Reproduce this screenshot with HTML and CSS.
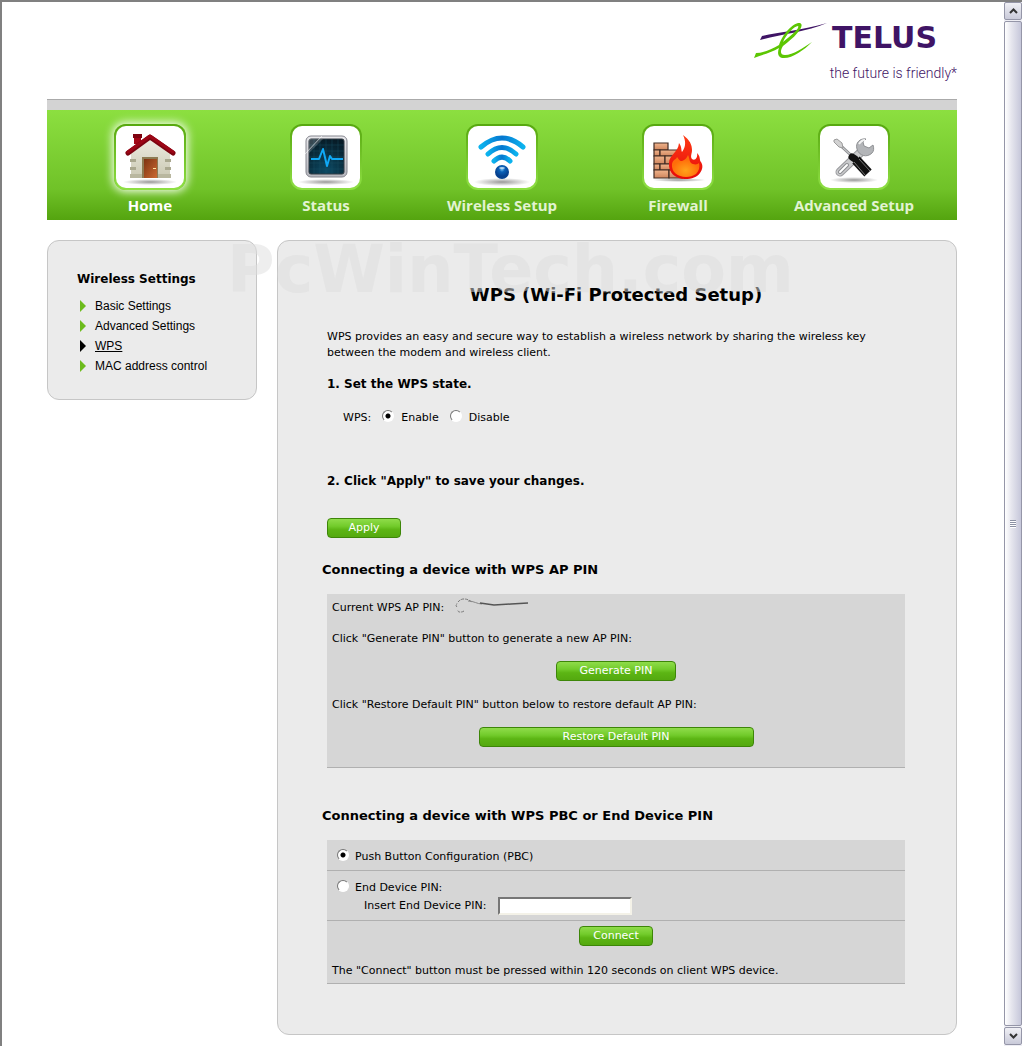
FILE: index.html
```html
<!DOCTYPE html>
<html lang="en">
<head>
<meta charset="utf-8">
<title>WPS (Wi-Fi Protected Setup)</title>
<link rel="stylesheet" href="styles.css">
</head>
<body>
<div class="frame">
  <div class="page">
    <header class="header">
      <div class="logo">
        <svg class="logo-mark" width="74" height="38" viewBox="0 0 74 38" aria-hidden="true">
          <path d="M8 14 C26 10 48 8 73 1 C52 10 28 12 6 18 Z" fill="#3f1465"/>
          <path d="M0 36 L2 31 C10 31 18 27 25 23 C29 11 40 0 46 1 C51 3 44 13 29 24 C26 29 26 33 31 33 C39 33 49 26 58 20 C50 28 39 36 30 36 C24 36 23 31 25 26 C17 31 7 33 0 36 Z M29 20 C38 13 46 6 44 4 C40 4 32 13 29 20 Z" fill="#5cc603" fill-rule="evenodd"/>
        </svg>
        <span class="logo-name">TELUS</span>
      </div>
      <p class="tagline">the future is friendly*</p>
    </header>

    <nav class="nav">
      <a class="nav-item current" href="#home">
        <span class="tile">
          <svg width="72" height="66" viewBox="0 0 72 66" aria-hidden="true">
            <defs>
              <radialGradient id="shade"><stop offset="0" stop-color="#999"/><stop offset="1" stop-color="#fff"/></radialGradient>
              <linearGradient id="wall" x2="0" y2="1"><stop offset="0" stop-color="#eeede2"/><stop offset="1" stop-color="#cbc9b4"/></linearGradient>
              <linearGradient id="door" x2="1" y2="1"><stop offset="0" stop-color="#7d3210"/><stop offset="1" stop-color="#cc6a32"/></linearGradient>
            </defs>
            <ellipse cx="36" cy="56" rx="27" ry="3" fill="url(#shade)"/>
            <path d="M20 9h7v9h-7z" fill="#a30716"/><path d="M19 8h9v4h-9z" fill="#7f0410"/>
            <path d="M17 51V26L36 11l20 15v25z" fill="url(#wall)"/>
            <path d="M16 33h6v3h-6zm0 8h6v3h-6zM51 33h6v3h-6zm0 8h6v3h-6z" fill="#aaa88f"/>
            <path d="M16 48h12v4H16zM44 48h13v4H44z" fill="#b9b79f"/>
            <path d="M28 31h16v21H28z" fill="#8d7b53"/><path d="M30 33h13v19H30z" fill="url(#door)"/>
            <path d="M39 42h3v1h-3z" fill="#ffe3a0"/>
            <path d="M14 27L36 11l23 16" fill="none" stroke="#7c0410" stroke-width="5" stroke-linecap="round" stroke-linejoin="round"/>
            <path d="M14 26L36 10l23 16" fill="none" stroke="#9c0616" stroke-width="3" stroke-linecap="round" stroke-linejoin="round"/>
          </svg>
        </span>
        Home
      </a>
      <a class="nav-item" href="#status">
        <span class="tile">
          <svg width="72" height="66" viewBox="0 0 72 66" aria-hidden="true">
            <defs>
              <linearGradient id="bezel" x2="0" y2="1"><stop offset="0" stop-color="#e9e9ec"/><stop offset="1" stop-color="#b4b5bc"/></linearGradient>
              <radialGradient id="screen" cx=".5" cy=".9" r=".9"><stop offset="0" stop-color="#0b4963"/><stop offset="1" stop-color="#071b26"/></radialGradient>
            </defs>
            <ellipse cx="36" cy="56" rx="28" ry="3" fill="url(#shade)"/>
            <rect x="16" y="10" width="41" height="41" rx="5" fill="url(#bezel)" stroke="#85868e"/>
            <rect x="19" y="13" width="35" height="35" rx="2" fill="url(#screen)" stroke="#333b42"/>
            <path d="M24 13v35M30 13v35M36 13v35M42 13v35M48 13v35M19 19h35M19 25h35M19 31h35M19 37h35M19 43h35" stroke="#1b5367" stroke-width=".4"/>
            <path d="M19 13h14L19 27z" fill="#fff" opacity=".2"/>
            <path d="M15 28L32 10" stroke="#fff" opacity=".6"/>
            <path d="M21 33h8l4-10 4 17 3-10 2 3h11" fill="none" stroke="#10a8f5" stroke-width="2" stroke-linejoin="round"/>
          </svg>
        </span>
        Status
      </a>
      <a class="nav-item" href="#wireless">
        <span class="tile">
          <svg width="72" height="66" viewBox="0 0 72 66" aria-hidden="true">
            <defs>
              <linearGradient id="wave"><stop offset="0" stop-color="#0bb2ee"/><stop offset=".5" stop-color="#0576cf"/><stop offset="1" stop-color="#0bb2ee"/></linearGradient>
              <radialGradient id="ball" cx=".5" cy=".3"><stop offset="0" stop-color="#79c4f3"/><stop offset=".4" stop-color="#0a61b8"/><stop offset="1" stop-color="#06418f"/></radialGradient>
            </defs>
            <ellipse cx="36" cy="56" rx="28" ry="4" fill="url(#shade)"/>
            <g fill="none" stroke="url(#wave)" stroke-width="5" stroke-linecap="round">
              <path d="M15 21Q36 3 57 21"/><path d="M22 28Q36 15 50 28"/><path d="M28 35Q36 27 44 35"/>
            </g>
            <circle cx="36" cy="46" r="7" fill="url(#ball)"/><ellipse cx="36" cy="42" rx="3" ry="1" fill="#fff" opacity=".6"/>
          </svg>
        </span>
        Wireless Setup
      </a>
      <a class="nav-item" href="#firewall">
        <span class="tile">
          <svg width="72" height="66" viewBox="0 0 72 66" aria-hidden="true">
            <defs>
              <linearGradient id="brick" x2="0" y2="1"><stop offset="0" stop-color="#f0b48c"/><stop offset="1" stop-color="#cf865e"/></linearGradient>
              <linearGradient id="flame" x2="0" y2="1"><stop offset="0" stop-color="#ff3b14"/><stop offset="1" stop-color="#e60a0a"/></linearGradient>
              <radialGradient id="glow" cx=".5" cy=".7"><stop offset="0" stop-color="#ffa31a"/><stop offset="1" stop-color="#ff6d0a"/></radialGradient>
            </defs>
            <ellipse cx="37" cy="54" rx="27" ry="2" fill="url(#shade)"/>
            <g fill="url(#brick)" stroke="#402b23" stroke-width="1.2">
              <path d="M12 17h14v7H12z"/><path d="M12 24h6v6h-6z"/><path d="M18 24h17v6H18z"/>
              <path d="M12 30h11v8H12z"/><path d="M23 30h12v8H23z"/><path d="M12 38h6v6h-6z"/>
              <path d="M18 38h17v6H18z"/><path d="M12 44h15v8H12z"/><path d="M27 44h14v8H27z"/>
            </g>
            <path d="M43 53C33 53 26 46 27 37C27 29 36 27 37 17C40 21 39 24 40 26C44 21 44 15 41 9C48 14 50 19 50 24C50 28 48 30 50 33C53 35 56 32 55 27C59 31 57 34 59 36C61 39 61 43 58 47C55 51 50 53 43 53Z" fill="url(#flame)"/>
            <path d="M44 51C36 51 29 46 30 38C31 33 34 34 35 31C37 33 37 35 40 35C43 34 45 32 46 29C48 33 47 37 51 38C54 39 56 38 57 37C58 41 57 45 54 48C51 50 48 51 44 51Z" fill="url(#glow)"/>
          </svg>
        </span>
        Firewall
      </a>
      <a class="nav-item" href="#advanced">
        <span class="tile">
          <svg width="72" height="66" viewBox="0 0 72 66" aria-hidden="true">
            <ellipse cx="36" cy="54" rx="24" ry="3" fill="url(#shade)"/>
            <path d="M22 46L42 27" stroke="#98999c" stroke-width="9" stroke-linecap="round"/>
            <path d="M22 46L42 27" stroke="#c9cacc" stroke-width="7" stroke-linecap="round"/>
            <path d="M22 46L29 39" stroke="#8b8d90" stroke-width="4" stroke-linecap="round"/>
            <path d="M22 46L29 39" stroke="#fff" stroke-width="2" stroke-linecap="round"/>
            <path d="M48 13C42 12 37 17 39 23C41 30 49 32 54 27C56 25 56 22 55 19L51 22L46 20L45 16Z" fill="#b3b5b8" stroke="#8f9194"/>
            <path d="M41 18C43 15 45 14 47 14" fill="none" stroke="#f2f2f2" stroke-width="2"/>
            <path d="M22 19L36 32" stroke="#8f9194" stroke-width="3"/><path d="M22 19L36 32" stroke="#dedede"/>
            <path d="M16 14l3-1 5 4 1 5-4-1-5-5z" fill="#d2d2d2" stroke="#9b9b9b"/>
            <path d="M34 31l3 2" stroke="#111" stroke-width="7" stroke-linecap="round"/>
            <path d="M38 34L50 47" stroke="#111" stroke-width="10"/>
            <path d="M36 36L47 49M41 33l11 12" stroke="#777"/>
          </svg>
        </span>
        Advanced Setup
      </a>
    </nav>

    <div class="columns">
      <aside class="panel sidebar">
        <h2 class="sidebar-title">Wireless Settings</h2>
        <ul class="menu">
          <li><a href="#basic">Basic Settings</a></li>
          <li><a href="#advanced-settings">Advanced Settings</a></li>
          <li class="active"><a href="#wps">WPS</a></li>
          <li><a href="#mac">MAC address control</a></li>
        </ul>
      </aside>

      <main class="panel content">
        <h1 class="title">WPS (Wi-Fi Protected Setup)</h1>
        <p class="intro">WPS provides an easy and secure way to establish a wireless network by sharing the wireless key between the modem and wireless client.</p>

        <h2 class="step">1. Set the WPS state.</h2>
        <div class="state" role="radiogroup" aria-labelledby="wps-label">
          <span id="wps-label">WPS:</span>
          <label class="option"><input class="radio" type="radio" name="wps" checked>Enable</label>
          <label class="option"><input class="radio" type="radio" name="wps">Disable</label>
        </div>

        <h2 class="step">2. Click "Apply" to save your changes.</h2>
        <button class="button apply" type="button">Apply</button>

        <h2 class="section-title">Connecting a device with WPS AP PIN</h2>
        <section class="box pin-box">
          <p class="pin-line">Current WPS AP PIN:
            <svg class="scribble" width="76" height="16" viewBox="0 0 76 16" aria-hidden="true">
              <path d="M10 13c-3 2-7 1-6-1M3 9c-2-2 0-2 0-4M4 4c4-5 10-3 14 0" fill="none" stroke="#777" stroke-dasharray="3 1"/>
              <path d="M14 3c6 0 9 3 14 3" fill="none" stroke="#888"/>
              <path d="M26 5l14 2 17-1 17-1" fill="none" stroke="#555" stroke-width="1.4"/>
            </svg>
          </p>
          <p>Click "Generate PIN" button to generate a new AP PIN:</p>
          <button class="button generate" type="button">Generate PIN</button>
          <p>Click "Restore Default PIN" button below to restore default AP PIN:</p>
          <button class="button restore" type="button">Restore Default PIN</button>
        </section>

        <h2 class="section-title second">Connecting a device with WPS PBC or End Device PIN</h2>
        <section class="box">
          <div class="row">
            <label class="option"><input class="radio" type="radio" name="method" checked>Push Button Configuration (PBC)</label>
          </div>
          <div class="row">
            <label class="option"><input class="radio" type="radio" name="method">End Device PIN:</label>
            <div class="field">
              <label for="device-pin">Insert End Device PIN:</label>
              <input class="text-input" id="device-pin" type="text">
            </div>
          </div>
          <div class="row connect-row">
            <button class="button connect" type="button">Connect</button>
            <p class="note">The "Connect" button must be pressed within 120 seconds on client WPS device.</p>
          </div>
        </section>
        <div class="watermark" aria-hidden="true">PcWinTech.com</div>
      </main>
    </div>
  </div>

  <div class="scrollbar" aria-hidden="true">
    <div class="scroll-end"><svg width="9" height="6" viewBox="0 0 9 6"><path d="M1 5l3.500-3.500L8 5" fill="none" stroke="#333" stroke-width="2"/></svg></div>
    <div class="thumb"><span class="grip"></span></div>
    <div class="scroll-end"><svg width="9" height="6" viewBox="0 0 9 6"><path d="M1 1l3.500 3.500L8 1" fill="none" stroke="#333" stroke-width="2"/></svg></div>
  </div>
</div>
</body>
</html>
```
FILE: styles.css
```css
* {
  box-sizing: border-box;
}

body, h1, h2, p, ul {
  margin: 0;
  padding: 0;
}

body {
  background: #fff;
  color: #000;
  font: 11px/16px Verdana, "DejaVu Sans", sans-serif;
}

a {
  color: inherit;
  text-decoration: none;
}

.frame {
  display: flex;
  min-height: 100vh;
  border-top: 2px solid #808080;
  border-left: 2px solid #808080;
}

.page {
  flex: 1;
  min-width: 0;
  padding: 0 47px 11px 45px;
}

/* Header */
.header {
  display: flex;
  flex-direction: column;
  align-items: flex-end;
  height: 98px;
  padding-top: 20px;
  border-bottom: 1px solid #aaa;
  color: #3f1465;
}

.logo {
  display: flex;
  gap: 4px;
  margin-right: 20px;
}

.logo-name {
  font: bold 30px/32px "DejaVu Sans", sans-serif;
}

.tagline {
  margin-top: 4px;
  font: 300 14px/18px Roboto, sans-serif;
}

/* Top navigation */
.nav {
  display: grid;
  grid-template-columns: repeat(5, 1fr);
  height: 120px;
  padding: 14px 15px 0;
  border-top: 10px solid #d3d3d3;
  background: linear-gradient(#8cdf40, #70c228 72%, #54a40f);
  color: #e2f3d2;
  font: bold 15px/20px "Open Sans", "Noto Sans", sans-serif;
}

.nav-item {
  display: flex;
  flex-direction: column;
  align-items: center;
  gap: 5px;
}

.tile {
  width: 72px;
  height: 66px;
  padding: 2px;
  border-radius: 12px;
  background: linear-gradient(#57a80f, #8fe044);
}

.tile::before {
  content: "";
  display: block;
  height: 62px;
  margin-bottom: -62px;
  border-radius: 10px;
  background: #fff;
}

.tile svg {
  display: block;
  position: relative;
  margin: -2px;
}

.current {
  color: #fff;
}

.current .tile {
  box-shadow: 0 0 8px 2px #effbe4;
}

/* Panels */
.columns {
  display: grid;
  grid-template-columns: 210px 1fr;
  gap: 20px;
  align-items: start;
  margin-top: 20px;
}

.panel {
  border: 1px solid #c6c6c6;
  border-radius: 12px;
  background: #ebebeb;
}

.sidebar {
  padding: 30px 20px 23px 29px;
}

.sidebar-title {
  margin-bottom: 9px;
  font-size: 12px;
  line-height: 16px;
}

.menu {
  list-style: none;
  font: 12px/20px Arial, "Liberation Sans", sans-serif;
}

.menu li {
  display: flex;
  align-items: center;
  gap: 9px;
  padding-left: 3px;
}

.menu li::before {
  content: "";
  border: solid transparent;
  border-width: 6px 0 6px 6px;
  border-left-color: #6dbb1c;
}

.menu .active::before {
  border-left-color: #000;
}

.active a {
  text-decoration: underline;
}

.content {
  position: relative;
  padding: 42px 51px 50px 49px;
}

.title {
  margin-bottom: 22px;
  font-size: 18px;
  line-height: 24px;
  text-align: center;
}

.step, .section-title {
  font-size: 13px;
  line-height: 16px;
}

.step {
  margin-top: 15px;
  font-size: 12px;
}

.state {
  display: flex;
  gap: 11px;
  margin: 18px 0 47px 16px;
}

.option {
  display: flex;
  gap: 7px;
}

.radio {
  appearance: none;
  width: 12px;
  height: 12px;
  margin: 0;
  border: 1px solid;
  border-color: #777 #fff #fff #777;
  border-radius: 50%;
  background: #fff;
}

.radio:checked {
  background: radial-gradient(circle, #000 0 2px, #fff 3px);
}

.button {
  display: block;
  height: 20px;
  padding: 0;
  border: 1px solid #3d8608;
  border-radius: 4px;
  background: linear-gradient(#8fdc4a, #72cb2b 40%, #5cb514 60%, #54a90f);
  color: #fff;
  font: inherit;
}

.apply {
  width: 74px;
  margin-top: 29px;
}

.section-title {
  margin: 24px 0 16px -5px;
}

.second {
  margin-top: 40px;
}

.box {
  background: #d6d6d6;
}

.pin-box {
  padding: 6px 5px 20px;
  border-bottom: 1px solid #b0b0b0;
}

.pin-line {
  display: flex;
  align-items: center;
  gap: 10px;
  height: 16px;
  margin-bottom: 15px;
}

.scribble {
  margin-bottom: 4px;
}

.generate, .restore, .connect {
  margin-right: auto;
  margin-left: auto;
}

.generate {
  width: 120px;
  margin-top: 14px;
  margin-bottom: 16px;
}

.restore {
  width: 275px;
  margin-top: 14px;
}

.row {
  padding: 9px 10px 5px;
  border-bottom: 1px solid #b0b0b0;
}

.row .option {
  gap: 6px;
}

.field {
  display: flex;
  align-items: center;
  gap: 12px;
  margin: 1px 0 0 27px;
}

.text-input {
  width: 134px;
  height: 18px;
  padding: 0 4px;
  border: 2px solid;
  border-color: #777 #f4f2e8 #f4f2e8 #777;
  background: #fff;
  font: inherit;
}

.connect-row {
  padding: 5px 5px 4px;
}

.connect {
  width: 74px;
}

.note {
  margin-top: 17px;
}

/* Watermark printed across the top of both panels */
.watermark {
  position: absolute;
  top: -7px;
  left: -51px;
  color: rgba(221, 221, 221, 0.5);
  font: bold 65px/72px "DejaVu Sans", sans-serif;
  white-space: nowrap;
  pointer-events: none;
}

/* Browser scroll bar */
.scrollbar {
  display: flex;
  flex-direction: column;
  gap: 1px;
  width: 18px;
  padding-bottom: 1px;
  background: #eeeef4;
}

.scroll-end, .thumb {
  display: flex;
  align-items: center;
  justify-content: center;
  border: 1px solid #9596a8;
  border-radius: 2px;
}

.scroll-end {
  height: 18px;
  background: linear-gradient(#f0f0f5, #c9cad9);
}

.thumb {
  flex: 1;
  background: linear-gradient(90deg, #fff, #e6e6ee 40%, #c6c7da);
}

.grip {
  width: 6px;
  height: 8px;
  background: repeating-linear-gradient(#8c91a3 0 1px, #fff 1px 2px);
}
```
